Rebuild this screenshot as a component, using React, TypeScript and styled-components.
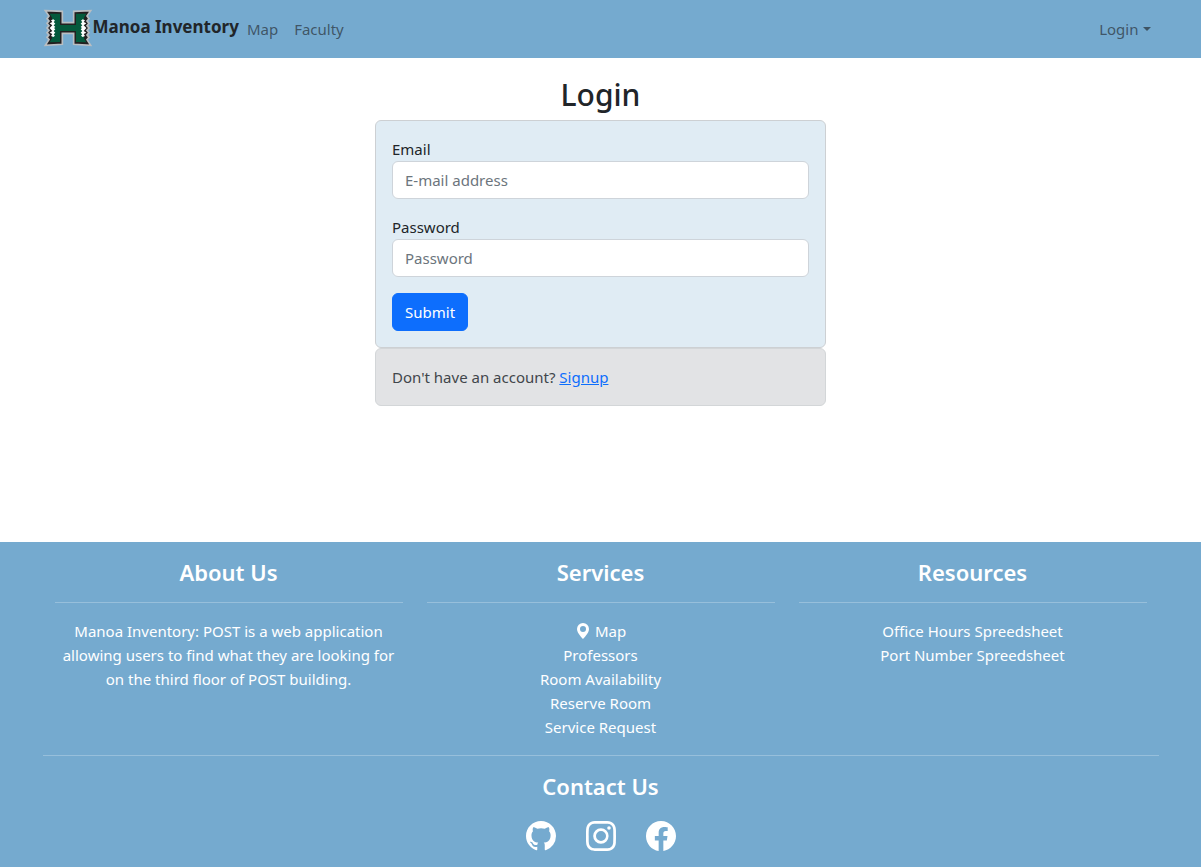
import React from 'react';
import styled, { createGlobalStyle } from 'styled-components';
import { BsFacebook, BsGeoAltFill, BsGithub, BsInstagram } from 'react-icons/bs';

const GlobalStyle = createGlobalStyle`
  *, *::before, *::after { box-sizing: border-box; }
  body {
    margin: 0;
    background: #fff;
    color: #212529;
    font-family: "Segoe UI", "Noto Sans", "Open Sans", sans-serif;
    font-size: 15px;
    line-height: 24px;
  }
  a { color: inherit; text-decoration: none; }
  button, input { font: inherit; }
`;

const Page = styled.div`
  min-height: 100vh;
  display: flex;
  flex-direction: column;
`;

const Container = styled.div`
  width: 100%;
  max-width: 1140px;
  margin: 0 auto;
  padding: 0 12px;
`;

const Navbar = styled.header`
  background: #75aacf;
  padding: 8px 0;
`;

const NavRow = styled(Container)`
  display: flex;
  align-items: center;
  min-height: 42px;
`;

const Brand = styled.a`
  display: flex;
  align-items: center;
  font-size: 17px;
  font-weight: 700;
`;

const BrandName = styled.span`
  padding-bottom: 4px;
`;

const Nav = styled.nav`
  flex: 1;
  display: flex;
`;

const NavLink = styled.a`
  padding: 8px;
  color: rgba(33, 37, 41, 0.65);
`;

const LoginToggle = styled.button`
  display: flex;
  align-items: center;
  gap: 4px;
  margin-left: auto;
  padding: 8px;
  border: 0;
  background: none;
  color: rgba(33, 37, 41, 0.65);
  cursor: pointer;

  &::after {
    content: "";
    border-top: 4px solid;
    border-left: 4px solid transparent;
    border-right: 4px solid transparent;
  }
`;

const Main = styled.main`
  flex: 1;
  padding: 16px 12px;
`;

const LoginColumn = styled.div`
  max-width: 451px;
  margin: 0 auto;
`;

const Title = styled.h1`
  margin: 0 0 4px;
  font-size: 30px;
  font-weight: 500;
  line-height: 42px;
  text-align: center;
`;

const Card = styled.form`
  padding: 16px;
  border: 1px solid #cdd0d3;
  border-radius: 6px;
  background: #e0ecf4;
`;

const Field = styled.div`
  margin-bottom: 16px;
`;

const Label = styled.label`
  display: block;
`;

const Input = styled.input`
  display: block;
  width: 100%;
  height: 38px;
  padding: 6px 12px;
  border: 1px solid #ced4da;
  border-radius: 6px;
  background: #fff;
  color: #212529;

  &::placeholder { color: #6c757d; opacity: 1; }
`;

const SubmitButton = styled.button`
  display: block;
  height: 38px;
  padding: 6px 12px;
  border: 1px solid #0d6efd;
  border-radius: 6px;
  background: #0d6efd;
  color: #fff;
  cursor: pointer;
`;

const Notice = styled.p`
  margin: 0;
  padding: 16px;
  border: 1px solid #d3d6d8;
  border-radius: 6px;
  background: #e2e3e5;
  color: #41464b;
`;

const SignupLink = styled.a`
  color: #0d6efd;
  text-decoration: underline;
`;

const Footer = styled.footer`
  padding: 16px 0;
  background: #75aacf;
  color: #fff;
  text-align: center;
`;

const FooterColumns = styled.div`
  display: grid;
  grid-template-columns: repeat(3, 1fr);
`;

const FooterColumn = styled.section`
  padding: 0 12px;
`;

const FooterHeading = styled.h2`
  margin: 0;
  font-size: 22px;
  font-weight: 600;
  line-height: 28px;
`;

const Divider = styled.hr`
  margin: 16px 0;
  border: 0;
  border-top: 1px solid rgba(255, 255, 255, 0.25);
`;

const FooterText = styled.p`
  margin: 0;
`;

const LinkList = styled.ul`
  margin: 0;
  padding: 0;
  list-style: none;
`;

const IconLink = styled.a`
  display: flex;
  align-items: center;
  justify-content: center;
  gap: 4px;
`;

const SocialLinks = styled.div`
  display: flex;
  justify-content: center;
  gap: 30px;
  padding-top: 21px;

  a { display: flex; }
`;

const outline =
  'M7 5 L58 7 L58 41 L92 41 L92 7 L143 5 L132 21 L138 29 L132 36 L138 43 L132 50 L138 57 L132 64 L138 71 L132 78 L138 85 L132 92 L143 109 L92 106 L92 73 L58 73 L58 106 L7 109 L18 92 L12 85 L18 78 L12 71 L18 64 L12 57 L18 50 L12 43 L18 36 L12 29 L18 21 Z';

const letter =
  'M20 14 L51 14 L51 48 L99 48 L99 14 L130 14 L123 26 L123 88 L130 100 L99 99 L99 66 L51 66 L51 99 L20 100 L27 88 L27 26 Z';

const teeth =
  'M24 34 L31 31 L36 35 L32 39 L37 44 L32 49 L37 54 L33 57 L37 61 L32 66 L37 71 L32 76 L36 80 L31 84 L24 81 L28 75 L20 71 L28 66 L20 57 L28 49 L20 43 L28 39 Z';

function Logo() {
  return (
    <svg width="50" height="40" viewBox="0 0 150 120" role="img" aria-label="Manoa H logo">
      <path d={outline} fill="#231f20" stroke="#b9bec2" strokeWidth="5" strokeLinejoin="miter" />
      <path d={letter} fill="#04593c" />
      <path d={teeth} fill="#fff" />
      <path d={teeth} fill="#fff" transform="matrix(-1 0 0 1 150 0)" />
    </svg>
  );
}

const services = ['Professors', 'Room Availability', 'Reserve Room', 'Service Request'];
const resources = ['Office Hours Spreedsheet', 'Port Number Spreedsheet'];

export default function App() {
  return (
    <Page>
      <GlobalStyle />
      <Navbar>
        <NavRow>
          <Brand href="#home">
            <Logo />
            <BrandName>Manoa Inventory</BrandName>
          </Brand>
          <Nav>
            <NavLink href="#map">Map</NavLink>
            <NavLink href="#faculty">Faculty</NavLink>
            <LoginToggle type="button" aria-haspopup="menu">Login</LoginToggle>
          </Nav>
        </NavRow>
      </Navbar>
      <Main>
        <LoginColumn>
          <Title>Login</Title>
          <Card>
            <Field>
              <Label htmlFor="email">Email</Label>
              <Input id="email" type="email" placeholder="E-mail address" />
            </Field>
            <Field>
              <Label htmlFor="password">Password</Label>
              <Input id="password" type="password" placeholder="Password" />
            </Field>
            <SubmitButton type="submit">Submit</SubmitButton>
          </Card>
          <Notice>
            Don't have an account? <SignupLink href="#signup">Signup</SignupLink>
          </Notice>
        </LoginColumn>
      </Main>
      <Footer>
        <Container>
          <FooterColumns>
            <FooterColumn>
              <FooterHeading>About Us</FooterHeading>
              <Divider />
              <FooterText>
                Manoa Inventory: POST is a web application allowing users to find what they are
                looking for on the third floor of POST building.
              </FooterText>
            </FooterColumn>
            <FooterColumn>
              <FooterHeading>Services</FooterHeading>
              <Divider />
              <LinkList>
                <li>
                  <IconLink href="#map"><BsGeoAltFill size={16} />Map</IconLink>
                </li>
                {services.map((name) => (
                  <li key={name}><a href="#services">{name}</a></li>
                ))}
              </LinkList>
            </FooterColumn>
            <FooterColumn>
              <FooterHeading>Resources</FooterHeading>
              <Divider />
              <LinkList>
                {resources.map((name) => (
                  <li key={name}><a href="#resources">{name}</a></li>
                ))}
              </LinkList>
            </FooterColumn>
          </FooterColumns>
          <Divider />
          <FooterHeading>Contact Us</FooterHeading>
          <SocialLinks>
            <a href="#github" aria-label="GitHub"><BsGithub size={30} /></a>
            <a href="#instagram" aria-label="Instagram"><BsInstagram size={30} /></a>
            <a href="#facebook" aria-label="Facebook"><BsFacebook size={30} /></a>
          </SocialLinks>
        </Container>
      </Footer>
    </Page>
  );
}
